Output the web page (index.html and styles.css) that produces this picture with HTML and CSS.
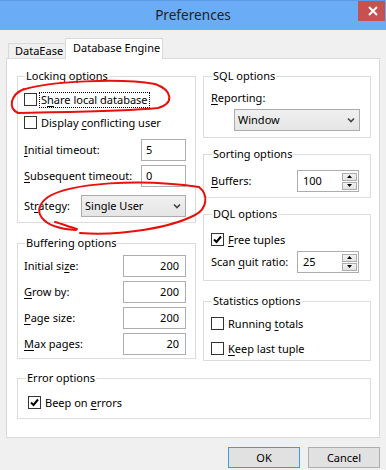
FILE: index.html
```html
<!DOCTYPE html>
<html>
<head>
<meta charset="utf-8">
<link rel="stylesheet" href="styles.css">
</head>
<body>
<div class="window">
  <div class="titlebar">
    <span></span>
    <span class="title">Preferences</span>
    <span class="close"><svg width="10" height="10" viewBox="0 0 10 10"><path d="M1 1 L9 9 M9 1 L1 9" stroke="#fff" stroke-width="2" fill="none"/></svg></span>
  </div>
  <div class="tabs">
    <div class="tab">DataEase</div>
    <div class="tab active">Database Engine</div>
  </div>
  <div class="panel">
    <div class="cols">
      <div class="col col-left">
        <fieldset class="group g-lock">
          <legend>Locking options</legend>
          <div class="row check-row first"><span class="cb"></span><span class="focus">S<u>h</u>are local database</span></div>
          <div class="row check-row"><span class="cb"></span><span class="lbl">Display <u>c</u>onflicting user</span></div>
          <div class="row field-row mt5"><span class="lbl"><u>I</u>nitial timeout:</span><span class="input w45">5</span></div>
          <div class="row field-row mt4"><span class="lbl"><u>S</u>ubsequent timeout:</span><span class="input w45">0</span></div>
          <div class="row field-row mt8"><span class="lbl">St<u>r</u>ategy:</span><span class="select w105"><span class="val">Single User</span><svg class="chev" width="8" height="6" viewBox="0 0 8 6"><path d="M1 1.5 L4 4.5 L7 1.5" stroke="#444" stroke-width="1.6" fill="none"/></svg></span></div>
        </fieldset>
        <fieldset class="group g-buf">
          <legend>Buffering options</legend>
          <div class="row field-row mt5"><span class="lbl">Initial si<u>z</u>e:</span><span class="input num w63">200</span></div>
          <div class="row field-row mt4"><span class="lbl"><u>G</u>row by:</span><span class="input num w63">200</span></div>
          <div class="row field-row mt4"><span class="lbl"><u>P</u>age size:</span><span class="input num w63">200</span></div>
          <div class="row field-row mt4"><span class="lbl"><u>M</u>ax pages:</span><span class="input num w63">20</span></div>
        </fieldset>
      </div>
      <div class="col col-right">
        <fieldset class="group g-sql">
          <legend>SQL options</legend>
          <div class="plain-lbl"><u>R</u>eporting:</div>
          <span class="select w125 sql-select"><span class="val">Window</span><svg class="chev" width="8" height="6" viewBox="0 0 8 6"><path d="M1 1.5 L4 4.5 L7 1.5" stroke="#444" stroke-width="1.6" fill="none"/></svg></span>
        </fieldset>
        <fieldset class="group g-sort">
          <legend>Sorting options</legend>
          <div class="row field-row mt9"><span class="lbl"><u>B</u>uffers:</span><span class="input spin w62"><span class="val">100</span><span class="spinbtns"><span class="sb"><svg width="5" height="3" viewBox="0 0 5 3"><path d="M0 3 L2.5 0 L5 3 Z" fill="#000"/></svg></span><span class="sb"><svg width="5" height="3" viewBox="0 0 5 3"><path d="M0 0 L2.5 3 L5 0 Z" fill="#000"/></svg></span></span></span></div>
        </fieldset>
        <fieldset class="group g-dql">
          <legend>DQL options</legend>
          <div class="row check-row mt7"><span class="cb checked"><svg width="11" height="11" viewBox="0 0 11 11"><path d="M2 5.5 L4.5 8 L9 2.5" stroke="#000" stroke-width="2" fill="none"/></svg></span><span class="lbl"><u>F</u>ree tuples</span></div>
          <div class="row field-row"><span class="lbl">Scan <u>q</u>uit ratio:</span><span class="input spin w62"><span class="val">25</span><span class="spinbtns"><span class="sb"><svg width="5" height="3" viewBox="0 0 5 3"><path d="M0 3 L2.5 0 L5 3 Z" fill="#000"/></svg></span><span class="sb"><svg width="5" height="3" viewBox="0 0 5 3"><path d="M0 0 L2.5 3 L5 0 Z" fill="#000"/></svg></span></span></span></div>
        </fieldset>
        <fieldset class="group g-stat">
          <legend>Statistics options</legend>
          <div class="row check-row mt4"><span class="cb"></span><span class="lbl">Running <u>t</u>otals</span></div>
          <div class="row check-row mt2"><span class="cb"></span><span class="lbl"><u>K</u>eep last tuple</span></div>
        </fieldset>
      </div>
    </div>
    <fieldset class="group g-err">
      <legend>Error options</legend>
      <div class="row check-row mt6"><span class="cb checked"><svg width="11" height="11" viewBox="0 0 11 11"><path d="M2 5.5 L4.5 8 L9 2.5" stroke="#000" stroke-width="2" fill="none"/></svg></span><span class="lbl">Beep on <u>e</u>rrors</span></div>
    </fieldset>
  </div>
  <div class="buttons">
    <span class="btn default">OK</span>
    <span class="btn">Cancel</span>
  </div>
  <svg class="annot" width="386" height="470" viewBox="0 0 386 470">
    <path d="M22 90 C 50 81, 120 78, 155 84 C 172 90, 175 103, 158 108 C 120 112, 50 112, 18 113 C 8 108, 10 95, 24 89" stroke="#e8100c" stroke-width="2" fill="none" stroke-linecap="round"/>
    <path d="M76 230 C 40 228, 30 210, 48 197 C 70 183, 140 178, 199 187 C 209 195, 207 209, 195 215 C 170 228, 120 236, 80 233" stroke="#e8100c" stroke-width="2" fill="none" stroke-linecap="round"/>
    <path d="M55 222 C 62 224, 70 227, 77 229" stroke="#e8100c" stroke-width="2" fill="none" stroke-linecap="round"/>
  </svg>
</div>
</body>
</html>
```
FILE: styles.css
```css
* { box-sizing: border-box; }
html, body { margin: 0; padding: 0; }
body {
  width: 386px;
  height: 470px;
  overflow: hidden;
  background: #f0f0f0;
  font-family: "Noto Sans", sans-serif;
  font-size: 11px;
  line-height: 14px;
  color: #000;
}
.window {
  position: relative;
  width: 386px;
  height: 470px;
  background: #f0f0f0;
}
.titlebar {
  height: 30px;
  background: #6aacf5;
  border-top: 1px solid #5b9be6;
  display: grid;
  grid-template-columns: 1fr auto 1fr;
}
.title {
  font-size: 13.6px;
  line-height: 28px;
  color: #222;
}
.close {
  justify-self: end;
  align-self: start;
  width: 27px;
  height: 20px;
  margin-right: 1px;
  background: #c75050;
  display: flex;
  align-items: center;
  justify-content: center;
  padding-left: 3px;
}
.close svg { display: block; }
.tabs {
  height: 28px;
  display: flex;
  align-items: flex-end;
  padding-left: 8px;
}
.tab {
  height: 15px;
  padding: 0 5px 0 6px;
  border: 1px solid #d9d9d9;
  border-bottom: none;
  background: #f0f0f0;
  line-height: 14px;
  width: 58px;
}
.tab.active {
  height: 21px;
  width: 98px;
  margin-left: -1px;
  margin-bottom: -1px;
  padding: 2px 0 0 7px;
  background: #fff;
  position: relative;
  z-index: 1;
}
.panel {
  margin: 0 6px;
  height: 380px;
  background: #fff;
  border: 1px solid #d9d9d9;
  padding: 10px 8px 0 10px;
}
.cols {
  display: flex;
  gap: 7px;
  align-items: flex-start;
}
.col-left { width: 179px; }
.col-right { width: 168px; }
.group {
  margin: 0;
  min-width: 0;
  border: 1px solid #dcdcdc;
  padding: 0 9px 0 6px;
}
.group legend {
  padding: 0 1px;
  margin-left: 1px;
  height: 14px;
  line-height: 14px;
}
.row { display: flex; align-items: center; }
.check-row { height: 23px; }
.field-row { height: 22px; justify-content: space-between; }
.mt2 { margin-top: 2px; }
.mt4 { margin-top: 4px; }
.mt5 { margin-top: 5px; }
.mt6 { margin-top: 6px; }
.mt7 { margin-top: 7px; }
.mt8 { margin-top: 8px; }
.mt9 { margin-top: 9px; }
.first { margin-top: 5px; }
.cb {
  width: 13px;
  height: 13px;
  border: 1px solid #333;
  background: #fff;
  margin-right: 4px;
  flex: none;
  display: flex;
  align-items: center;
  justify-content: center;
}
.cb svg { display: block; }
.focus {
  border: 1px dotted #000;
  padding: 0 1px;
  margin-left: -2px;
  line-height: 14px;
}
u { text-decoration: underline; text-underline-offset: 2px; text-decoration-thickness: 1px; }
.input {
  height: 22px;
  border: 1px solid #abadb3;
  background: #fff;
  display: flex;
  align-items: center;
  padding: 0 4px;
  flex: none;
}
.input.num { justify-content: flex-end; padding-right: 6px; }
.w45 { width: 45px; }
.w63 { width: 63px; }
.w62 { width: 62px; }
.w105 { width: 105px; }
.w125 { width: 126px; }
.select {
  height: 22px;
  border: 1px solid #acacac;
  background: linear-gradient(#f0f0f0, #e5e5e5);
  display: flex;
  align-items: center;
  padding: 0 4px 0 3px;
  flex: none;
}
.select .val { flex: 1; }
.chev { display: block; }
.g-lock { padding-bottom: 5px; }
.g-buf { margin-top: 13px; padding-bottom: 3px; }
.g-sql { padding-left: 7px; padding-bottom: 6px; }
.plain-lbl { margin-top: 8px; height: 14px; }
.sql-select { margin-top: 4px; margin-left: 23px; }
.g-sort { margin-top: 9px; padding-left: 7px; padding-right: 11px; padding-bottom: 5px; }
.g-dql { margin-top: 9px; padding-left: 7px; padding-right: 11px; padding-bottom: 7px; }
.g-stat { margin-top: 13px; padding-left: 7px; padding-bottom: 0; }
.spin { padding: 0 1px 0 5px; }
.spin .val { flex: 1; }
.spinbtns {
  display: flex;
  flex-direction: column;
  gap: 1px;
}
.sb {
  width: 15px;
  height: 8px;
  border: 1px solid #acacac;
  background: linear-gradient(#f2f2f2, #e3e3e3);
  display: flex;
  align-items: center;
  justify-content: center;
}
.sb svg { display: block; }
.g-err {
  width: 354px;
  margin-top: 10px;
  padding: 0 10px 4px 10px;
}
.g-err legend { margin-left: -2px; }
.buttons {
  display: flex;
  justify-content: flex-end;
  gap: 8px;
  padding: 9px 6px 0 0;
}
.btn {
  width: 72px;
  height: 21px;
  border: 1px solid #adadad;
  background: #e1e1e1;
  display: flex;
  align-items: center;
  justify-content: center;
  font-size: 11px;
}
.btn.default { border-color: #3c9ae8; }
.annot {
  position: absolute;
  left: 0;
  top: 0;
  pointer-events: none;
}
```
